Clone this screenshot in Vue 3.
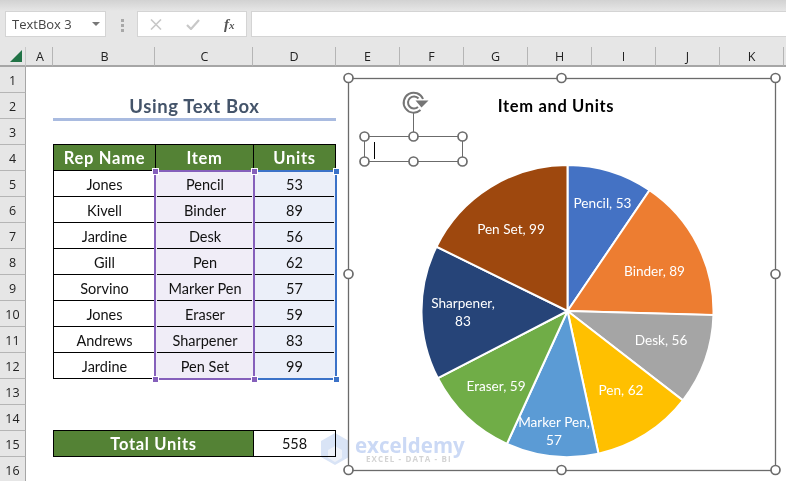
<script setup>
const colLetters = ['A','B','C','D','E','F','G','H','I','J','K']
const rowsNums = Array.from({ length: 16 }, (_, i) => i + 1)
const data = [
  ['Jones','Pencil',53],['Kivell','Binder',89],['Jardine','Desk',56],['Gill','Pen',62],
  ['Sorvino','Marker Pen',57],['Jones','Eraser',59],['Andrews','Sharpener',83],['Jardine','Pen Set',99]
]
const colors = ['#4472c4','#ed7d31','#a5a5a5','#ffc000','#5b9bd5','#70ad47','#264478','#9e480e']
const cx = 567.5, cy = 311, r = 146
const total = data.reduce((s, d) => s + d[2], 0)
let acc = 0
const slices = data.map((d, i) => {
  const a0 = acc / total * 2 * Math.PI
  acc += d[2]
  const a1 = acc / total * 2 * Math.PI
  const p = a => [cx + r * Math.sin(a), cy - r * Math.cos(a)].map(n => n.toFixed(2)).join(' ')
  return { d: `M${cx} ${cy}L${p(a0)}A${r} ${r} 0 0 1 ${p(a1)}Z`, fill: colors[i] }
})
const labels = [
  { x: 602.5, y: 208, t: ['Pencil, 53'] },
  { x: 654.5, y: 276, t: ['Binder, 89'] },
  { x: 661, y: 345, t: ['Desk, 56'] },
  { x: 621, y: 395, t: ['Pen, 62'] },
  { x: 554, y: 427, t: ['Marker Pen,', '57'] },
  { x: 496, y: 391, t: ['Eraser, 59'] },
  { x: 463, y: 308, t: ['Sharpener,', '83'] },
  { x: 511, y: 234, t: ['Pen Set, 99'] }
]
const chartHandles = [[348.5,78],[561.5,78],[775.5,78],[348.5,274],[775.5,274],[348.5,470],[561.5,470],[775.5,470]]
const boxHandles = [[364.5,136.5],[413.5,136.5],[462.5,136.5],[364.5,161.5],[413.5,161.5],[462.5,161.5]]
</script>

<template>
  <div class="app">
    <div class="ribbon-edge"></div>
    <div class="formula-row">
      <div class="name-box"><span>TextBox 3</span><i class="caret-down"></i></div>
      <div class="grip"></div>
      <div class="fx-box">
        <svg width="12" height="11" viewBox="0 0 12 11"><path d="M1 .5l10 10M11 .5L1 10.5" stroke="#c8c8c8" stroke-width="1.6" fill="none"/></svg>
        <svg width="14" height="11" viewBox="0 0 14 11"><path d="M1 6l4 4 8-9" stroke="#c8c8c8" stroke-width="2.2" fill="none"/></svg>
        <span class="fx">f<small>x</small></span>
      </div>
      <div class="formula-input"></div>
    </div>

    <div class="sheet">
      <div class="corner"><i></i></div>
      <div v-for="(c, i) in colLetters" :key="c" class="col-head" :class="{ shift: i < 3 }">{{ c }}</div>
      <div class="col-rest"></div>
      <div v-for="n in rowsNums" :key="n" class="row-head" :style="{ gridRow: n + 1 }">{{ n }}</div>

      <div class="title">Using Text Box</div>

      <div class="th b4">Rep Name</div>
      <div class="th c4">Item</div>
      <div class="th d4">Units</div>

      <template v-for="(d, i) in data" :key="i">
        <div class="td name" :style="{ gridRow: i + 6 }">{{ d[0] }}</div>
        <div class="td item" :style="{ gridRow: i + 6 }">{{ d[1] }}</div>
        <div class="td unit" :style="{ gridRow: i + 6 }">{{ d[2] }}</div>
      </template>

      <div class="range purple"><i class="h tl"></i><i class="h tr"></i><i class="h bl"></i><i class="h br"></i></div>
      <div class="range blue"><i class="h tr"></i><i class="h br"></i></div>

      <div class="total-label">Total Units</div>
      <div class="total-val">558</div>
    </div>

    <div class="watermark">
      <svg width="30" height="34" viewBox="0 0 30 34"><path d="M15 1L29 9v16l-14 8L1 25V9z" fill="#d9e4f6"/><path d="M15 14l7 4v8l-7 4-7-4v-8z" fill="#eef2f9"/></svg>
      <div class="wm-text"><b>exceldemy</b><span>EXCEL - DATA - BI</span></div>
    </div>

    <svg class="chart" width="786" height="481" viewBox="0 0 786 481">
      <rect x="348.5" y="78.5" width="427" height="392" fill="none" stroke="#6b6b6b" stroke-width="1.3"/>
      <text x="556" y="111.5" class="chart-title">Item and Units</text>
      <path v-for="(s, i) in slices" :key="i" :d="s.d" :fill="s.fill" stroke="#fff" stroke-width="2"/>
      <text v-for="(l, i) in labels" :key="'l' + i" class="pie-label" :x="l.x" :y="l.y">
        <tspan v-for="(t, j) in l.t" :key="j" :x="l.x" :dy="j ? 18 : 0">{{ t }}</tspan>
      </text>
      <circle v-for="(h, i) in chartHandles" :key="'c' + i" :cx="h[0]" :cy="h[1]" r="4.5" fill="#fff" stroke="#6b6b6b" stroke-width="1.7"/>
      <rect x="364.5" y="136.5" width="98" height="25" fill="none" stroke="#6b6b6b" stroke-width="1"/>
      <path d="M413.5 136V112" stroke="#6b6b6b" stroke-width="1"/>
      <path d="M374.5 142v17" stroke="#000" stroke-width="1"/>
      <circle v-for="(h, i) in boxHandles" :key="'b' + i" :cx="h[0]" :cy="h[1]" r="4.5" fill="#fff" stroke="#6b6b6b" stroke-width="1.7"/>
      <g fill="none" stroke="#757575" stroke-width="2">
        <path d="M420.5 110A10 10 0 1 1 423 99"/>
        <path d="M418 107A6 6 0 1 1 418.5 98.5"/>
        <path d="M415.5 100.5H428.5L421.5 107.5Z" fill="#757575" stroke="none"/>
      </g>
    </svg>
  </div>
</template>

<style>
html, body { margin: 0; background: #fff; }
</style>

<style scoped>
.app {
  position: relative;
  width: 786px;
  height: 481px;
  overflow: hidden;
  background: #e6e6e6;
  font-family: Lato, sans-serif;
}
.ribbon-edge {
  height: 11px;
  background: linear-gradient(#d2d2d2, #e6e6e6);
}
.formula-row {
  display: flex;
  align-items: stretch;
  height: 26px;
  padding-left: 5px;
  margin-bottom: 10px;
}
.name-box {
  width: 101px;
  box-sizing: border-box;
  background: #fff;
  border: 1px solid #d4d4d4;
  display: flex;
  align-items: center;
  justify-content: space-between;
  padding: 0 5px 0 6px;
  font: 13px "Open Sans", sans-serif;
  color: #444;
}
.caret-down {
  width: 0;
  height: 0;
  border: 4px solid transparent;
  border-top: 4px solid #777;
  border-bottom: 0;
}
.grip {
  width: 3px;
  height: 13px;
  margin: 8px 13px 0 15px;
  background: repeating-linear-gradient(#a8a8a8 0 3px, transparent 3px 5px);
}
.fx-box {
  width: 110px;
  box-sizing: border-box;
  background: #fff;
  border: 1px solid #d4d4d4;
  display: flex;
  align-items: center;
  gap: 24px;
  padding-left: 12px;
}
.fx {
  font: italic bold 15px "Liberation Serif", serif;
  color: #555;
}
.fx small { font-size: 11px; }
.formula-input {
  flex: 1;
  margin-left: 4px;
  background: #fff;
  border: 1px solid #d4d4d4;
  border-right: 0;
}
.sheet {
  display: grid;
  grid-template-columns: 26px 27px 102px 98px 83px repeat(7, 64px) 2px;
  grid-template-rows: 20px repeat(16, 26px);
  background: #fff;
}
.corner {
  background: #e6e6e6;
  border-bottom: 2px solid #a6a6a6;
  box-sizing: border-box;
  border-right: 1px solid #c8c8c8;
  position: relative;
}
.corner i {
  position: absolute;
  right: 3px;
  bottom: 3px;
  border-left: 12px solid transparent;
  border-bottom: 12px solid #217346;
}
.col-head, .col-rest {
  background: #e6e6e6;
  border-right: 1px solid #b5b5b5;
  border-bottom: 2px solid #a6a6a6;
  box-sizing: border-box;
  font: 12.5px "Open Sans", sans-serif;
  color: #222;
  text-align: center;
  line-height: 19px;
}
.col-head.shift { padding-left: 2px; }
.col-rest { border-right: 0; }
.row-head {
  grid-column: 1;
  background: #e6e6e6;
  border-bottom: 1px solid #b5b5b5;
  border-right: 1px solid #a6a6a6;
  box-sizing: border-box;
  font: 12.5px "Open Sans", sans-serif;
  color: #222;
  display: flex;
  align-items: center;
  justify-content: center;
  padding-top: 2px;
}
.title {
  grid-column: 3 / 6;
  grid-row: 3;
  border-bottom: 3px solid #a9bbe0;
  box-sizing: border-box;
  height: 28px;
  font: 700 18.5px Lato, sans-serif;
  letter-spacing: 0.6px;
  color: #44546a;
  text-align: center;
  line-height: 26px;
}
.th, .td, .total-label, .total-val {
  display: flex;
  align-items: center;
  justify-content: center;
  box-sizing: border-box;
}
.th {
  grid-row: 5;
  background: #548235;
  color: #fff;
  font: 700 16.5px Lato, sans-serif;
  letter-spacing: 0.7px;
  border: 1px solid #000;
  border-right: 0;
  height: 27px;
  margin-top: -1px;
}
.b4 { grid-column: 3; }
.c4 { grid-column: 4; }
.d4 { grid-column: 5; border-right: 1px solid #000; }
.td {
  font: 14.5px Lato, sans-serif;
  color: #111;
}
.name { grid-column: 3; border-left: 1px solid #000; border-bottom: 1px solid #000; padding-top: 1px; }
.item, .unit { position: relative; }
.item { grid-column: 4; background: #f0edf7; padding-left: 2px; }
.unit { grid-column: 5; background: #ebeff9; }
.item::after, .unit::after {
  content: "";
  position: absolute;
  bottom: 0;
  height: 1px;
  background: #000;
}
.item::after { left: 2px; right: 1px; }
.unit::after { left: 2px; right: 2px; }
.range {
  grid-row: 6 / 14;
  position: relative;
  box-sizing: border-box;
  border: 2px solid;
  pointer-events: none;
  margin-top: -1px;
  margin-bottom: -1px;
}
.purple { grid-column: 4; border-color: #8560bb; margin-left: -1px; margin-right: -2px; }
.blue { grid-column: 5; border-color: #3b72c8; border-left: 0; margin-left: 2px; margin-right: -1px; }
.h {
  position: absolute;
  width: 5px;
  height: 5px;
  background: currentColor;
  border: 1px solid #fff;
  z-index: 1;
}
.purple .h { color: #8560bb; }
.blue .h { color: #3b72c8; }
.tl { left: -4.5px; top: -4.5px; }
.tr { right: -4.5px; top: -4.5px; }
.bl { left: -4.5px; bottom: -4.5px; }
.br { right: -4.5px; bottom: -4.5px; }
.total-label {
  grid-column: 3 / 5;
  grid-row: 16;
  background: #548235;
  color: #fff;
  font: 700 16.5px Lato, sans-serif;
  letter-spacing: 0.7px;
  border: 1px solid #000;
  border-right: 0;
  height: 27px;
  margin-top: -1px;
}
.total-val {
  grid-column: 5;
  grid-row: 16;
  border: 1px solid #000;
  font: 14.5px Lato, sans-serif;
  color: #111;
  height: 27px;
  margin-top: -1px;
}
.watermark {
  position: absolute;
  left: 320px;
  top: 432px;
  display: flex;
  gap: 5px;
  align-items: flex-start;
  mix-blend-mode: multiply;
}
.wm-text { display: flex; flex-direction: column; margin-top: 3px; }
.wm-text b {
  font: 700 20.5px/20px "Open Sans", sans-serif;
  color: #cbd9f5;
}
.wm-text span {
  font: 700 8px/7px "Open Sans", sans-serif;
  color: #d4d4d4;
  letter-spacing: 1.1px;
  margin-left: 11px;
  white-space: nowrap;
}
.chart {
  position: absolute;
  left: 0;
  top: 0;
  pointer-events: none;
}
.chart-title {
  font: 700 16.5px Lato, sans-serif;
  letter-spacing: 0.65px;
  fill: #000;
  text-anchor: middle;
}
.pie-label {
  font: 13.6px Lato, sans-serif;
  fill: #fff;
  text-anchor: middle;
}
</style>
